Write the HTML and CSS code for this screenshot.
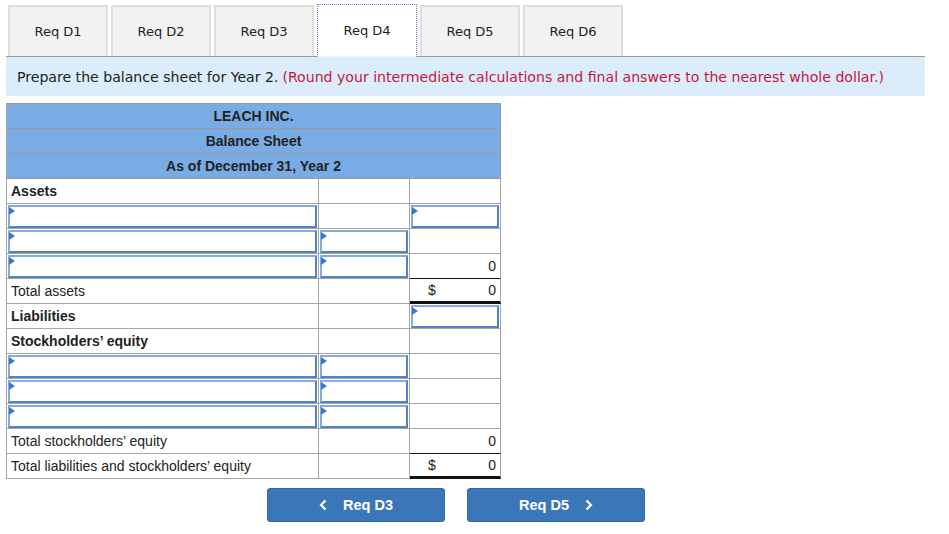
FILE: index.html
```html
<!DOCTYPE html>
<html>
<head>
<meta charset="utf-8">
<link rel="stylesheet" href="styles.css">
</head>
<body>
<div class="page">
  <div class="tabs">
    <div class="tab">Req D1</div>
    <div class="tab">Req D2</div>
    <div class="tab">Req D3</div>
    <div class="tab active">Req D4</div>
    <div class="tab">Req D5</div>
    <div class="tab">Req D6</div>
  </div>
  <div class="instr">Prepare the balance sheet for Year 2. <span class="note">(Round your intermediate calculations and final answers to the nearest whole dollar.)</span></div>
  <table class="bs">
    <colgroup><col class="c1"><col class="c2"><col class="c3"></colgroup>
    <tr class="hd"><td colspan="3">LEACH INC.</td></tr>
    <tr class="hd"><td colspan="3">Balance Sheet</td></tr>
    <tr class="hd"><td colspan="3">As of December 31, Year 2</td></tr>
    <tr><td class="lbl b">Assets</td><td></td><td></td></tr>
    <tr><td class="in"><div class="field"></div></td><td></td><td class="in"><div class="field"></div></td></tr>
    <tr><td class="in"><div class="field"></div></td><td class="in"><div class="field"></div></td><td></td></tr>
    <tr><td class="in"><div class="field"></div></td><td class="in"><div class="field"></div></td><td class="num ul">0</td></tr>
    <tr><td class="lbl">Total assets</td><td></td><td class="num dbl"><span class="dol">$</span>0</td></tr>
    <tr><td class="lbl b">Liabilities</td><td></td><td class="in"><div class="field"></div></td></tr>
    <tr><td class="lbl b">Stockholders’ equity</td><td></td><td></td></tr>
    <tr><td class="in"><div class="field"></div></td><td class="in"><div class="field"></div></td><td></td></tr>
    <tr><td class="in"><div class="field"></div></td><td class="in"><div class="field"></div></td><td></td></tr>
    <tr><td class="in"><div class="field"></div></td><td class="in"><div class="field"></div></td><td></td></tr>
    <tr><td class="lbl">Total stockholders’ equity</td><td></td><td class="num ul">0</td></tr>
    <tr><td class="lbl">Total liabilities and stockholders’ equity</td><td></td><td class="num dbl"><span class="dol">$</span>0</td></tr>
  </table>
  <div class="nav">
    <button class="btn"><svg class="chev" width="8" height="12" viewBox="0 0 8 12"><path d="M6.5 1.5 L2 6 L6.5 10.5" fill="none" stroke="#fff" stroke-width="2.2"/></svg><span>Req D3</span></button>
    <button class="btn next"><span>Req D5</span><svg class="chev" width="8" height="12" viewBox="0 0 8 12"><path d="M1.5 1.5 L6 6 L1.5 10.5" fill="none" stroke="#fff" stroke-width="2.2"/></svg></button>
  </div>
</div>
</body>
</html>
```
FILE: styles.css
```css
html, body { margin: 0; padding: 0; background: #fff; }
.page { padding: 4px 0 0 6px; width: 919px; font-family: "DejaVu Sans", Verdana, sans-serif; color: #222; }
.tabs { display: flex; gap: 3px; padding-left: 2px; border-bottom: 1px solid #9a9a9a; height: 52px; align-items: flex-end; }
.tab { width: 100px; height: 51px; box-sizing: border-box; background: #f2f2f2; border: 2px solid #dedede; border-bottom: none; display: flex; align-items: center; justify-content: center; font-size: 13px; color: #222; }
.tab.active { background: #fff; height: 53px; margin-bottom: -1px; border: 1px dotted #4f7fbf; border-bottom: 1px dotted #e6e6e6; }
.instr { background: #dbecfa; height: 39px; display: flex; align-items: center; padding-left: 11px; font-size: 14.1px; color: #222; }
.note { color: #c4173c; margin-left: 4px; }
.bs { margin-top: 7px; border-collapse: separate; border-spacing: 0; border-top: 1px solid #999; border-left: 1px solid #a5a5a5; width: 495px; table-layout: fixed; font-family: "Liberation Sans", Arial, sans-serif; font-size: 14px; line-height: 16px; color: #222; }
.c1 { width: 312px; } .c2 { width: 91px; } .c3 { width: 91px; }
.bs td { border-right: 1px solid #a5a5a5; border-bottom: 1px solid #a5a5a5; height: 25px; padding: 0 4px 1px; box-sizing: border-box; }
.bs tr.hd td { background: #79ace4; text-align: center; font-weight: bold; border-color: #999; }
.bs td.b { font-weight: bold; }
.bs td.in { padding: 1px 1px 0 1px; }
.field { position: relative; height: 23px; box-sizing: border-box; border: 2px solid; border-color: #86abe0 #4f83c6 #4f83c6 #86abe0; background: #fff; }
.field::before { content: ""; position: absolute; left: -1px; top: 0; border-left: 6px solid #3d78c6; border-top: 4px solid transparent; border-bottom: 4px solid transparent; }
.bs td.num { text-align: right; padding-right: 4px; }
.dol { float: left; margin-left: 14px; }
.bs td.ul { border-bottom: 1px solid #111; }
.bs td.dbl { border-bottom: 3px solid #111; padding-bottom: 0; }
.nav { display: flex; gap: 22px; margin: 9px 0 0 261px; }
.btn { width: 178px; height: 34px; background: #3b76b9; border: 1px solid #3468a8; border-radius: 3px; color: #fff; font-family: "Liberation Sans", Arial, sans-serif; font-weight: bold; font-size: 14.5px; display: flex; align-items: center; justify-content: center; gap: 16px; padding: 0; }
.chev { display: block; }
```
